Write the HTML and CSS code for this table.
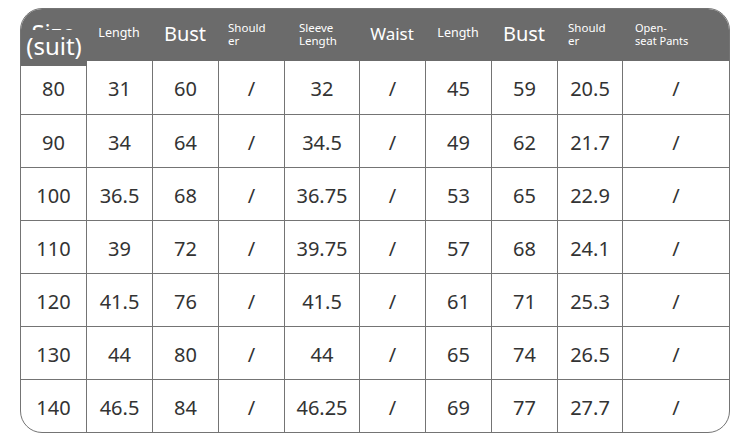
FILE: index.html
```html
<!DOCTYPE html>
<html>
<head>
<meta charset="utf-8">
<link rel="stylesheet" href="styles.css">
</head>
<body>
<div class="sheet">
  <div class="row head">
    <div class="cell hc size-head"><span class="size-top">Size</span><span class="size-suit">(suit)</span></div>
    <div class="cell hc small">Length</div>
    <div class="cell hc big">Bust</div>
    <div class="cell hc wrap pl10">Should<br>er</div>
    <div class="cell hc wrap pl15">Sleeve<br>Length</div>
    <div class="cell hc mid">Waist</div>
    <div class="cell hc small">Length</div>
    <div class="cell hc big">Bust</div>
    <div class="cell hc wrap pl11">Should<br>er</div>
    <div class="cell hc wrap pl13">Open-<br>seat Pants</div>
  </div>
  <div class="row body"><div class="cell">80</div><div class="cell">31</div><div class="cell">60</div><div class="cell">/</div><div class="cell">32</div><div class="cell">/</div><div class="cell">45</div><div class="cell">59</div><div class="cell">20.5</div><div class="cell">/</div></div>
  <div class="row body"><div class="cell">90</div><div class="cell">34</div><div class="cell">64</div><div class="cell">/</div><div class="cell">34.5</div><div class="cell">/</div><div class="cell">49</div><div class="cell">62</div><div class="cell">21.7</div><div class="cell">/</div></div>
  <div class="row body"><div class="cell">100</div><div class="cell">36.5</div><div class="cell">68</div><div class="cell">/</div><div class="cell">36.75</div><div class="cell">/</div><div class="cell">53</div><div class="cell">65</div><div class="cell">22.9</div><div class="cell">/</div></div>
  <div class="row body"><div class="cell">110</div><div class="cell">39</div><div class="cell">72</div><div class="cell">/</div><div class="cell">39.75</div><div class="cell">/</div><div class="cell">57</div><div class="cell">68</div><div class="cell">24.1</div><div class="cell">/</div></div>
  <div class="row body"><div class="cell">120</div><div class="cell">41.5</div><div class="cell">76</div><div class="cell">/</div><div class="cell">41.5</div><div class="cell">/</div><div class="cell">61</div><div class="cell">71</div><div class="cell">25.3</div><div class="cell">/</div></div>
  <div class="row body"><div class="cell">130</div><div class="cell">44</div><div class="cell">80</div><div class="cell">/</div><div class="cell">44</div><div class="cell">/</div><div class="cell">65</div><div class="cell">74</div><div class="cell">26.5</div><div class="cell">/</div></div>
  <div class="row body"><div class="cell">140</div><div class="cell">46.5</div><div class="cell">84</div><div class="cell">/</div><div class="cell">46.25</div><div class="cell">/</div><div class="cell">69</div><div class="cell">77</div><div class="cell">27.7</div><div class="cell">/</div></div>
</div>
</body>
</html>
```
FILE: styles.css
```css
html, body {
  margin: 0;
  padding: 0;
  background: #ffffff;
}
body {
  font-family: "Noto Sans", "Open Sans", sans-serif;
  color: #333333;
}
.sheet {
  margin: 8px 0 0 20px;
  width: 708px;
  border: 1px solid #747474;
  border-radius: 22px;
  overflow: hidden;
}
.row {
  display: grid;
  grid-template-columns: 65px 66px 66px 66px 75px 66px 66px 66px 65px 107px;
}
.head {
  height: 52px;
  background: #6b6b6b;
  color: #ffffff;
  position: relative;
  z-index: 1;
}
.body {
  height: 53px;
  box-sizing: border-box;
}
.body + .body {
  border-top: 1px solid #747474;
}
.body .cell + .cell {
  border-left: 1px solid #747474;
}
.cell {
  display: flex;
  align-items: center;
  justify-content: center;
  font-size: 20px;
  padding-top: 2px;
  box-sizing: border-box;
}
.hc {
  padding-top: 0;
  padding-bottom: 8px;
  line-height: 1;
}
.small { font-size: 12.5px; }
.big { font-size: 20px; }
.mid { font-size: 17px; }
.wrap {
  justify-content: flex-start;
  text-align: left;
  font-size: 11.5px;
  line-height: 12.5px;
  padding-bottom: 6px;
}
.pl10 { padding-left: 10px; }
.pl11 { padding-left: 11px; }
.pl13 { padding-left: 13px; font-size: 11px; }
.pl15 { padding-left: 15px; }
.size-head {
  flex-direction: column;
  justify-content: flex-start;
  align-items: stretch;
  padding: 12px 0 0 0;
  font-size: 24px;
  text-align: center;
}
.size-top {
  display: block;
  line-height: 24px;
}
.size-suit {
  display: block;
  margin: -15px -1px 0 0;
  line-height: 32px;
  padding-bottom: 4px;
  background: #6b6b6b;
}
```
